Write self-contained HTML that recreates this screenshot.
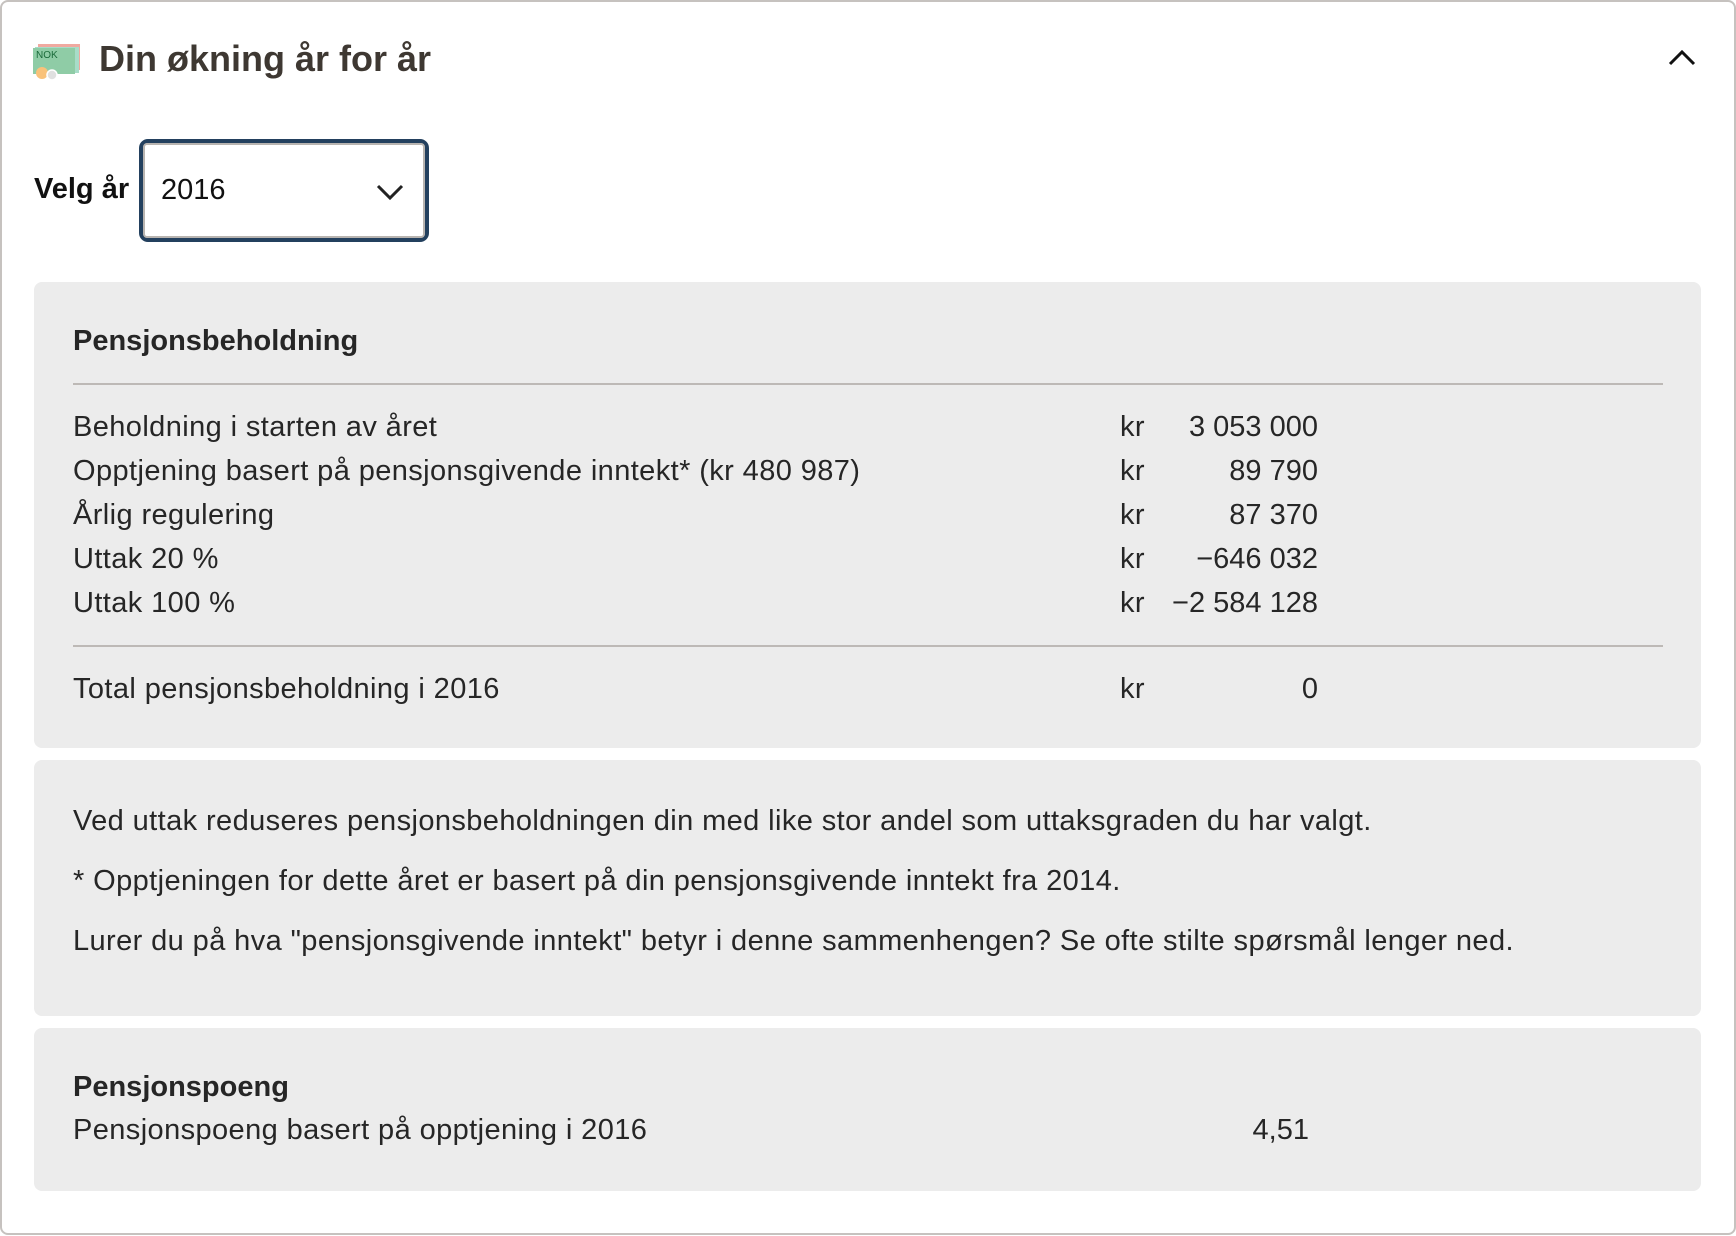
<!DOCTYPE html>
<html><head><meta charset="utf-8"><style>
*{margin:0;padding:0;box-sizing:border-box}
body{width:1736px;height:1236px;background:#fff;font-family:"Liberation Sans",sans-serif;color:#262626;position:relative;overflow:hidden}
.frame{position:absolute;left:0;top:0;width:1736px;height:1235px;border:2px solid #c6c2bf;border-radius:8px}
.a{position:absolute;white-space:nowrap;line-height:1}
.t{font-size:29px;letter-spacing:0.4px}
.b{font-weight:bold;letter-spacing:0}
.panel{position:absolute;left:34px;width:1667px;background:#ececec;border-radius:8px}
.hr{position:absolute;left:73px;width:1590px;height:2px;background:#bdb9b6}
.r{text-align:right;width:200px;letter-spacing:0}
</style></head><body>
<div class="frame"></div>
<svg class="a" style="left:32px;top:42px" width="52" height="40" viewBox="0 0 52 40">
<rect x="6" y="2" width="42" height="26" fill="#f0a9a0"/>
<rect x="3" y="5" width="44" height="26" fill="#a8dcc8"/>
<rect x="1" y="6" width="42" height="26" fill="#8fcca6"/>
<text x="4" y="16" font-size="10" fill="#1a6a3a" font-family="Liberation Sans">NOK</text>
<circle cx="10" cy="31" r="6" fill="#f9c27a"/>
<circle cx="20" cy="33" r="5" fill="#e0e0e0" stroke="#fff" stroke-width="1.5"/>
</svg>
<div class="a b" style="left:99px;top:41px;font-size:36px;color:#3e3832">Din økning år for år</div>
<svg class="a" style="left:1667px;top:48px" width="30" height="20" viewBox="0 0 30 20"><path d="M3 16 L15 4 L27 16" fill="none" stroke="#111" stroke-width="3"/></svg>
<div class="a b" style="left:34px;top:175px;font-size:29px;color:#111">Velg år</div>
<div class="a" style="left:139px;top:139px;width:290px;height:103px;border:4px solid #23405e;border-radius:9px;background:#fff"><div style="position:absolute;inset:0;border:2px solid #b8b4b0;border-radius:4px"></div></div>
<div class="a" style="left:161px;top:176px;font-size:29px;color:#111">2016</div>
<svg class="a" style="left:375px;top:182px" width="30" height="20" viewBox="0 0 30 20"><path d="M3 4 L15 16 L27 4" fill="none" stroke="#222" stroke-width="3"/></svg>

<div class="panel" style="top:282px;height:466px"></div>
<div class="a b t" style="left:73px;top:327px">Pensjonsbeholdning</div>
<div class="hr" style="top:383px"></div>
<div class="a t" style="left:73px;top:413px">Beholdning i starten av året</div>
<div class="a t" style="left:73px;top:457px">Opptjening basert på pensjonsgivende inntekt* (kr 480 987)</div>
<div class="a t" style="left:73px;top:501px">Årlig regulering</div>
<div class="a t" style="left:73px;top:545px">Uttak 20 %</div>
<div class="a t" style="left:73px;top:589px">Uttak 100 %</div>
<div class="a t" style="left:1120px;top:413px">kr</div>
<div class="a t" style="left:1120px;top:457px">kr</div>
<div class="a t" style="left:1120px;top:501px">kr</div>
<div class="a t" style="left:1120px;top:545px">kr</div>
<div class="a t" style="left:1120px;top:589px">kr</div>
<div class="a t r" style="left:1118px;top:413px">3 053 000</div>
<div class="a t r" style="left:1118px;top:457px">89 790</div>
<div class="a t r" style="left:1118px;top:501px">87 370</div>
<div class="a t r" style="left:1118px;top:545px">−646 032</div>
<div class="a t r" style="left:1118px;top:589px">−2 584 128</div>
<div class="hr" style="top:645px"></div>
<div class="a t" style="left:73px;top:675px">Total pensjonsbeholdning i 2016</div>
<div class="a t" style="left:1120px;top:675px">kr</div>
<div class="a t r" style="left:1118px;top:675px">0</div>

<div class="panel" style="top:760px;height:256px"></div>
<div class="a t" style="left:73px;top:807px">Ved uttak reduseres pensjonsbeholdningen din med like stor andel som uttaksgraden du har valgt.</div>
<div class="a t" style="left:73px;top:867px">* Opptjeningen for dette året er basert på din pensjonsgivende inntekt fra 2014.</div>
<div class="a t" style="left:73px;top:927px">Lurer du på hva "pensjonsgivende inntekt" betyr i denne sammenhengen? Se ofte stilte spørsmål lenger ned.</div>

<div class="panel" style="top:1028px;height:163px"></div>
<div class="a b t" style="left:73px;top:1073px">Pensjonspoeng</div>
<div class="a t" style="left:73px;top:1116px">Pensjonspoeng basert på opptjening i 2016</div>
<div class="a t r" style="left:1109px;top:1116px">4,51</div>
</body></html>
